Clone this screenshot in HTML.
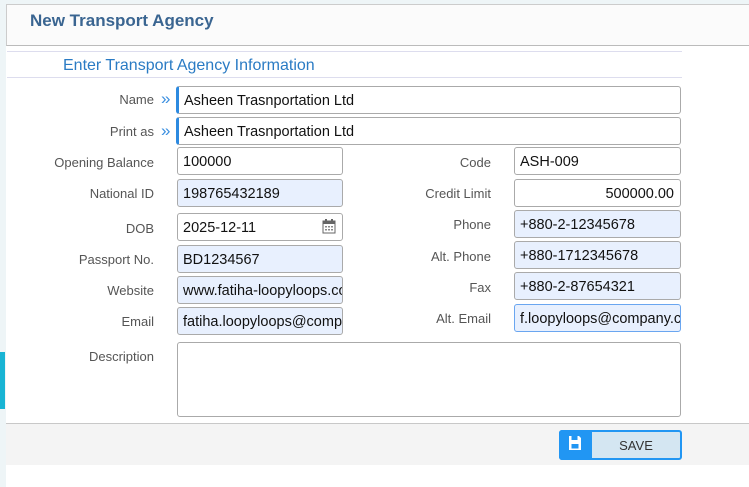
<!DOCTYPE html>
<html><head><style>
body{margin:0;width:749px;height:487px;background:#fff;font-family:"Liberation Sans",sans-serif;position:relative;overflow:hidden}
.a{position:absolute}
.lbl{position:absolute;font-size:13px;color:#555;text-align:right}
.in{position:absolute;box-sizing:border-box;border:1px solid #aaa;border-radius:3px;background:#fff;font-size:14.5px;color:#111;padding:0 0 0 5px;line-height:28px;height:28px;white-space:nowrap;overflow:hidden}
.bl{background:#e8f0fe}
.ch{position:absolute;color:#3b8fe0;font-size:17px;line-height:17px}
</style></head><body>
<div class="a" style="left:0;top:0;width:749px;height:4px;background:#eef5f7"></div>
<div class="a" style="left:0;top:0;width:6px;height:487px;background:#eef5f7"></div>
<div class="a" style="left:0;top:352px;width:5px;height:57px;background:#18b4d4"></div>
<div class="a" style="left:6px;top:4px;width:743px;height:40px;background:#fbfbfb;border-top:1px solid #ccc;border-left:1px solid #ccc;border-bottom:1px solid #bbb"></div>
<div class="a" style="left:30px;top:11px;font-size:17px;font-weight:bold;color:#3a6591">New Transport Agency</div>
<div class="a" style="left:7px;top:51px;width:675px;height:1px;background:#dde"></div>
<div class="a" style="left:63px;top:57px;font-size:16px;color:#2a7bc4">Enter Transport Agency Information</div>
<div class="a" style="left:7px;top:77px;width:675px;height:1px;background:#dde"></div>

<div class="lbl" style="right:595px;top:92px">Name</div>
<div class="ch" style="left:161px;top:90px">»</div>
<div class="in" style="left:176px;top:86px;width:505px;border-left:3px solid #2d8ae0">Asheen Trasnportation Ltd</div>
<div class="lbl" style="right:595px;top:124px">Print as</div>
<div class="ch" style="left:161px;top:122px">»</div>
<div class="in" style="left:176px;top:117px;width:505px;border-left:3px solid #2d8ae0">Asheen Trasnportation Ltd</div>

<div class="lbl" style="right:595px;top:155px">Opening Balance</div>
<div class="in" style="left:177px;top:147px;width:166px">100000</div>
<div class="lbl" style="right:258px;top:155px">Code</div>
<div class="in" style="left:514px;top:147px;width:167px">ASH-009</div>

<div class="lbl" style="right:595px;top:186px">National ID</div>
<div class="in bl" style="left:177px;top:179px;width:166px">198765432189</div>
<div class="lbl" style="right:258px;top:186px">Credit Limit</div>
<div class="in" style="left:514px;top:179px;width:167px;text-align:right;padding-right:6px">500000.00</div>

<div class="lbl" style="right:595px;top:221px">DOB</div>
<div class="in" style="left:177px;top:213px;width:166px">2025-12-11</div>
<svg class="a" style="left:322px;top:219px" width="14" height="15" viewBox="0 0 14 15"><rect x="1" y="2" width="12" height="12" fill="#fff" stroke="#666"/><rect x="1" y="2" width="12" height="3" fill="#666"/><rect x="3" y="0" width="2" height="3" fill="#666"/><rect x="9" y="0" width="2" height="3" fill="#666"/><g fill="#888"><rect x="3" y="7" width="2" height="1.5"/><rect x="6" y="7" width="2" height="1.5"/><rect x="9" y="7" width="2" height="1.5"/><rect x="3" y="10" width="2" height="1.5"/><rect x="6" y="10" width="2" height="1.5"/><rect x="9" y="10" width="2" height="1.5"/></g></svg>
<div class="lbl" style="right:258px;top:217px">Phone</div>
<div class="in bl" style="left:514px;top:210px;width:167px">+880-2-12345678</div>

<div class="lbl" style="right:595px;top:252px">Passport No.</div>
<div class="in bl" style="left:177px;top:245px;width:166px">BD1234567</div>
<div class="lbl" style="right:258px;top:249px">Alt. Phone</div>
<div class="in bl" style="left:514px;top:241px;width:167px">+880-1712345678</div>

<div class="lbl" style="right:595px;top:283px">Website</div>
<div class="in bl" style="left:177px;top:276px;width:166px">www.fatiha-loopyloops.com</div>
<div class="lbl" style="right:258px;top:280px">Fax</div>
<div class="in bl" style="left:514px;top:272px;width:167px">+880-2-87654321</div>

<div class="lbl" style="right:595px;top:314px">Email</div>
<div class="in bl" style="left:177px;top:307px;width:166px">fatiha.loopyloops@company.com</div>
<div class="lbl" style="right:258px;top:311px">Alt. Email</div>
<div class="in bl" style="left:514px;top:304px;width:167px;border-color:#6aa6f0">f.loopyloops@company.com</div>

<div class="lbl" style="right:595px;top:349px">Description</div>
<div class="in" style="left:177px;top:342px;width:504px;height:75px"></div>

<div class="a" style="left:6px;top:423px;width:743px;height:41px;background:#f4f4f4;border-top:1px solid #c8c8c8"></div>
<div class="a" style="left:559px;top:430px;width:123px;height:30px;box-sizing:border-box;border:2px solid #2196f3;border-radius:3px;background:#d4e6f2"></div>
<div class="a" style="left:559px;top:430px;width:33px;height:30px;background:#2196f3;border-radius:3px 0 0 3px"></div>
<svg class="a" style="left:568px;top:435px" width="14" height="16" viewBox="0 0 14 16"><path d="M1 1h10l2 2v12H1z" fill="#fff"/><rect x="3.5" y="1" width="6" height="4" fill="#2196f3"/><rect x="3.5" y="9" width="7" height="4.5" fill="#2196f3"/></svg>
<div class="a" style="left:592px;top:438px;width:88px;text-align:center;font-size:13px;color:#333">SAVE</div>
</body></html>
